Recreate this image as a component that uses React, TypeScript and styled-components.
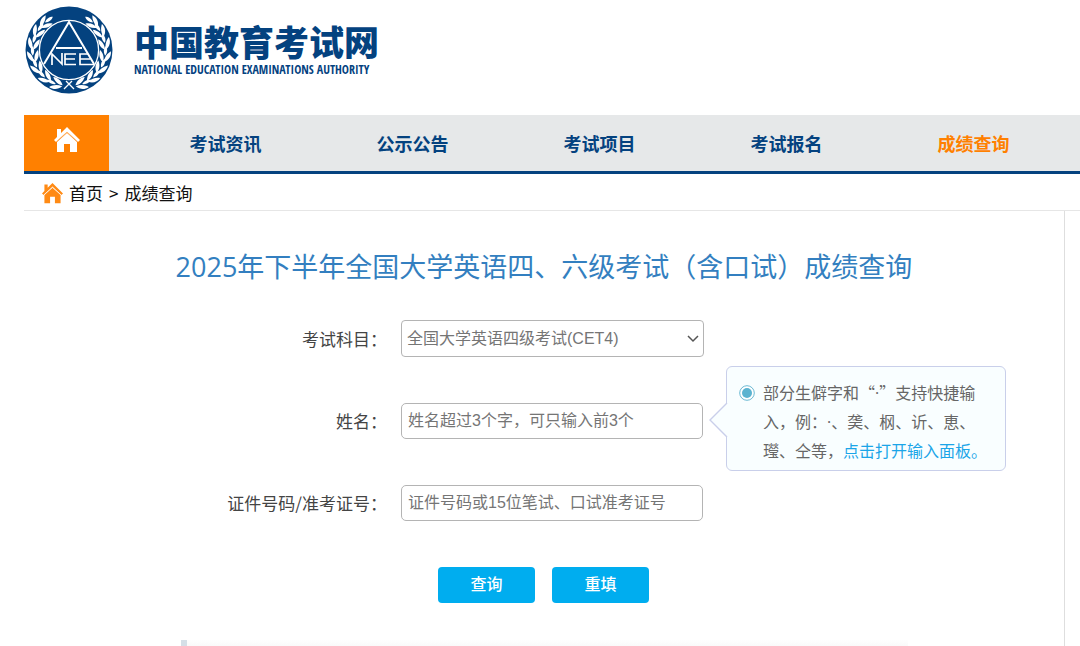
import React from "react";
import styled, { createGlobalStyle } from "styled-components";

const sans = `"Open Sans", "Noto Sans CJK SC", sans-serif`;
const cjk = `"Noto Sans CJK SC", sans-serif`;
const arial = `"Liberation Sans", "Noto Sans CJK SC", sans-serif`;

const GlobalStyle = createGlobalStyle`
  *, *::before, *::after { box-sizing: border-box; }
  body { margin: 0; background: #fff; color: #222; font-family: ${cjk}; }
  a { color: inherit; text-decoration: none; }
`;

const Page = styled.div`
  padding-left: 24px;
  min-height: 100vh;
  display: flex;
  flex-direction: column;
  overflow-x: hidden;
`;

const Header = styled.header`
  height: 115px;
  padding-top: 6px;
  display: flex;
  align-items: flex-start;
  gap: 20px;
  color: #04427f;
`;

const Brand = styled.div`
  padding-top: 14px;
`;

const BrandName = styled.div`
  font: 900 35px/42px ${cjk};
  white-space: nowrap;
`;

const BrandSub = styled.div`
  font: 700 12px/16px "Open Sans Condensed", "Roboto Condensed", Lato, sans-serif;
  white-space: nowrap;
`;

const Nav = styled.nav`
  display: flex;
  height: 59px;
  background: #e6e8e9;
  border-bottom: 3px solid #04427f;
  overflow: hidden;
`;

const HomeLink = styled.a`
  flex: none;
  width: 85px;
  display: flex;
  justify-content: center;
  padding-top: 12px;
  background: #ff8000;
`;

const NavItems = styled.div`
  flex: 1;
  display: flex;
  padding-left: 23px;
`;

const NavLink = styled.a<{ $active?: boolean }>`
  flex: none;
  width: 187px;
  text-align: center;
  font: 700 18px/56px ${cjk};
  color: ${(p) => (p.$active ? "#ff8000" : "#04427f")};
`;

const Crumbs = styled.div`
  display: flex;
  align-items: center;
  gap: 6px;
  height: 37px;
  padding: 2px 0 0 18px;
  border-bottom: 1px solid #e6e6e6;
  font: 17px/34px ${cjk};
  color: #111;
`;

const Main = styled.main`
  flex: 1;
  margin-right: 15px;
  border-right: 1px solid #dedede;
  display: flex;
  flex-direction: column;
`;

const Title = styled.h1`
  margin: 36px 0 0;
  text-align: center;
  font: 400 27px/40px ${sans};
  color: #337fc0;
  white-space: nowrap;
`;

const Form = styled.form`
  margin-top: 33px;
`;

const Row = styled.div`
  position: relative;
  display: grid;
  grid-template-columns: 363px 303px;
  column-gap: 14px;
  align-items: center;
  margin-bottom: 46px;
`;

const Label = styled.label`
  text-align: right;
  font: 17px/36px ${cjk};
  color: #444;
  white-space: nowrap;
`;

const Input = styled.input`
  width: 302px;
  height: 36px;
  padding: 0 6px;
  border: 1px solid #b4b4b4;
  border-radius: 5px;
  background: #fff;
  font: 16px ${arial};
  color: #757575;
  &::placeholder { color: #757575; opacity: 1; }
`;

const SelectBox = styled.div`
  position: relative;
  svg { position: absolute; right: 5px; top: 14px; pointer-events: none; }
`;

const Select = styled.select`
  display: block;
  appearance: none;
  width: 100%;
  height: 37px;
  padding: 0 5px;
  border: 1px solid #b4b4b4;
  border-radius: 4px;
  background: #fff;
  font: 16px ${arial};
  color: #757575;
`;

const Tip = styled.div`
  position: absolute;
  left: 702px;
  top: -37px;
  width: 280px;
  height: 105px;
  padding: 11px 12px;
  display: flex;
  gap: 8px;
  border: 1px solid #c9cfea;
  border-radius: 6px;
  background: #f9feff;
  font: 16px/28px ${cjk};
  color: #666;
`;

const TipArrow = styled.svg`
  position: absolute;
  left: -18px;
  top: 35px;
`;

const TipDot = styled.svg`
  flex: none;
  margin-top: 7px;
`;

const TipText = styled.div`
  white-space: nowrap;
  text-spacing-trim: space-all;
`;

const Narrow = styled.span`
  font-family: "Open Sans", sans-serif;
`;

const TipLink = styled.a`
  color: #1ba5e8;
`;

const Actions = styled.div`
  display: flex;
  gap: 17px;
  padding-left: 414px;
`;

const Button = styled.button`
  width: 97px;
  height: 36px;
  border: 0;
  border-radius: 4px;
  background: #00adef;
  color: #fff;
  font: 500 16px/32px ${cjk};
  padding: 0 0 4px;
`;

const Notice = styled.section`
  flex: 1;
  margin: 37px 156px 0 157px;
  border-left: 6px solid #d5dfe7;
  background: linear-gradient(#fefefe, #f8f8f8 8px);
`;

const leafAngles = [-150, -130, -110, -90, -70, -50, -32];

const Wreath = () => (
  <g fill="#fff">
    {leafAngles.map((a) => (
      <g key={a} transform={`rotate(${a + 80}) translate(-36 0) scale(1.2)`}>
        <path d="M-0.4 5C-4.4 2.5-5.6-1-4.6-5C-1.8-2.5-0.2 0.5-0.4 5Z" />
        <path d="M0.6 5C-0.2 1.5 1-2 4.4-4.6C5.4-1 3.6 3 0.6 5Z" />
        <path d="M-0.4-0.6C-2.2-3.4-1.6-6.4 0.4-8.6C2-6 1.6-3.2-0.4-0.6Z" />
      </g>
    ))}
  </g>
);

const Emblem = () => (
  <svg width="90" height="88" viewBox="-45 -44 90 88" aria-hidden="true">
    <circle r="43.5" fill="#04427f" />
    <Wreath />
    <g transform="scale(-1 1)"><Wreath /></g>
    <circle r="29.6" fill="#04427f" stroke="#fff" strokeWidth="1.3" />
    <g fill="none" stroke="#fff" strokeWidth="2">
      <path d="M-25 14L0-28L25 14M-13-2H13" />
      <path d="M-17 15V4L-7 14V3M7 4H-4V14.500H7M-4 9H6M25 14.500H11V4H19M11 9H21" strokeWidth="1.7" />
      <path d="M-5 39L3 31M5 39L-3 31" strokeWidth="1.3" />
    </g>
  </svg>
);

const House = ({ size, color, line }: { size: number; color: string; line: string }) => (
  <svg width={size} height={size} viewBox="0 0 26 26" aria-hidden="true">
    <path d="M3 2H7V6L13 0L26 13L24 15L13 5L2 15L0 13L3 10Z" fill={color} />
    <path d="M3 15L13 6L23 15V25H16V17H10V25H3Z" fill={color} />
    <path d="M2 15L13 5L24 15" fill="none" stroke={line} strokeWidth="0.8" />
  </svg>
);

const navItems = ["考试资讯", "公示公告", "考试项目", "考试报名", "成绩查询"];

export default function App() {
  return (
    <>
      <GlobalStyle />
      <Page>
        <Header>
          <Emblem />
          <Brand>
            <BrandName>中国教育考试网</BrandName>
            <BrandSub>NATIONAL EDUCATION EXAMINATIONS AUTHORITY</BrandSub>
          </Brand>
        </Header>
        <Nav>
          <HomeLink href="#" aria-label="首页">
            <House size={26} color="#fff" line="#ffb871" />
          </HomeLink>
          <NavItems>
            {navItems.map((n, i) => (
              <NavLink key={n} href="#" $active={i === 4}>{n}</NavLink>
            ))}
          </NavItems>
        </Nav>
        <Crumbs>
          <House size={21} color="#ff8a14" line="#fff" />
          <a href="#">首页</a>
          <span>&gt;</span>
          <a href="#">成绩查询</a>
        </Crumbs>
        <Main>
          <Title>2025年下半年全国大学英语四、六级考试（含口试）成绩查询</Title>
          <Form onSubmit={(e) => e.preventDefault()}>
            <Row>
              <Label htmlFor="subject">考试科目：</Label>
              <SelectBox>
                <Select id="subject">
                  <option>全国大学英语四级考试(CET4)</option>
                </Select>
                <svg width="12" height="9" viewBox="0 0 12 9" aria-hidden="true">
                  <path d="M1 2L6 7L11 2" fill="none" stroke="#555" strokeWidth="1.5" />
                </svg>
              </SelectBox>
            </Row>
            <Row>
              <Label htmlFor="name">姓名：</Label>
              <Input id="name" placeholder="姓名超过3个字，可只输入前3个" />
              <Tip>
                <TipArrow width="19" height="36" viewBox="0 0 19 36" aria-hidden="true">
                  <path d="M19 0L1 18L19 36Z" fill="#f9feff" />
                  <path d="M18 1L1 18L18 35" fill="none" stroke="#c9cfea" strokeWidth="1.4" />
                </TipArrow>
                <TipDot width="16" height="16" viewBox="0 0 16 16" aria-hidden="true">
                  <circle cx="8" cy="8" r="7.3" fill="#fff" stroke="#6bb9d3" strokeWidth="1" />
                  <circle cx="8" cy="8" r="5" fill="#5bb3d0" />
                </TipDot>
                <TipText>
                  部分生僻字和“<Narrow>·</Narrow>”支持快捷输<br />
                  入，例：<Narrow>·</Narrow>、䶮、㭎、䜣、恵、<br />
                  㼆、仝等，<TipLink href="#">点击打开输入面板。</TipLink>
                </TipText>
              </Tip>
            </Row>
            <Row>
              <Label htmlFor="idno">证件号码/准考证号：</Label>
              <Input id="idno" placeholder="证件号码或15位笔试、口试准考证号" />
            </Row>
            <Actions>
              <Button type="submit">查询</Button>
              <Button type="reset">重填</Button>
            </Actions>
          </Form>
          <Notice />
        </Main>
      </Page>
    </>
  );
}
